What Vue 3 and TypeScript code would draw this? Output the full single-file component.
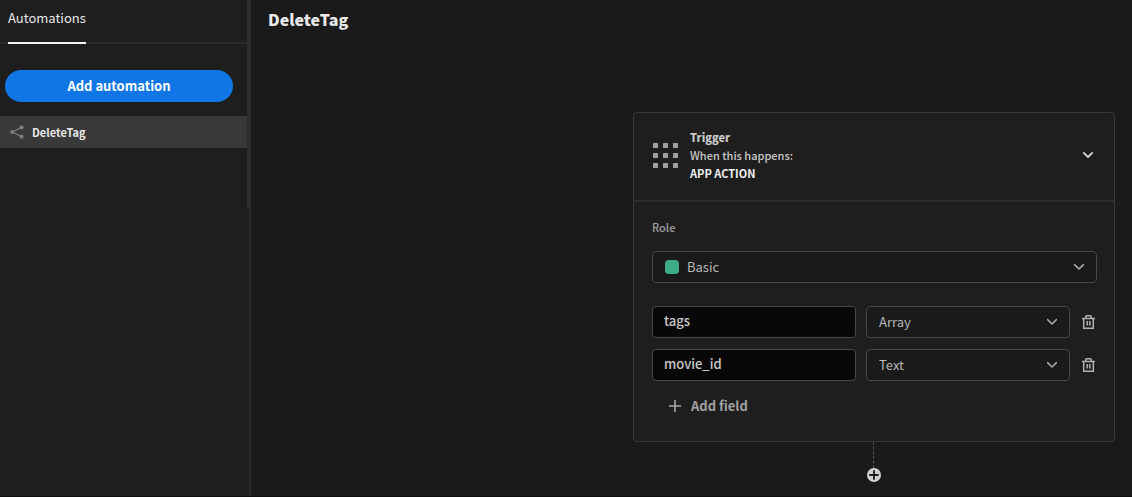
<script setup lang="ts">
import { ref } from 'vue'

interface Field {
  id: number
  name: string
  type: string
}

const automations = ref<string[]>(['DeleteTag'])
const selected = ref('DeleteTag')
const role = ref('Basic')
const open = ref(true)
const roles = ['Basic', 'Power', 'Admin', 'Public']
const types = ['Text', 'Number', 'Boolean', 'Array', 'DateTime']
const fields = ref<Field[]>([
  { id: 1, name: 'tags', type: 'Array' },
  { id: 2, name: 'movie_id', type: 'Text' },
])
const dots = [0, 1, 2].flatMap((row) => [0, 1, 2].map((col) => ({ x: col * 10, y: row * 10 })))
let nextId = 3

function addField() {
  fields.value.push({ id: nextId++, name: '', type: 'Text' })
}

function removeField(id: number) {
  fields.value = fields.value.filter((f) => f.id !== id)
}
</script>

<template>
  <div class="builder">
    <aside class="sidebar">
      <div class="pane">
        <nav class="tabs">
          <a href="#automations" class="tab">Automations</a>
        </nav>
        <button type="button" class="add-automation">Add automation</button>
        <ul class="list">
          <li v-for="name in automations" :key="name">
            <button
              type="button"
              class="item"
              :class="{ active: name === selected }"
              @click="selected = name"
            >
              <svg class="share" viewBox="0 0 14 14" aria-hidden="true">
                <path d="M11.5 2.2 2.5 7l9 4.8" fill="none" stroke="currentColor" stroke-width="1.2" />
                <circle cx="11.5" cy="2.3" r="2.1" fill="currentColor" />
                <circle cx="2.3" cy="7" r="2.1" fill="currentColor" />
                <circle cx="11.5" cy="11.7" r="2.1" fill="currentColor" />
              </svg>
              <span>{{ name }}</span>
            </button>
          </li>
        </ul>
      </div>
    </aside>

    <main class="main">
      <h1 class="title">{{ selected }}</h1>
      <div class="canvas">
        <div class="flow">
          <section class="card">
            <header class="card-head">
              <svg class="apps" viewBox="0 0 25 25" aria-hidden="true">
                <rect
                  v-for="(dot, i) in dots"
                  :key="i"
                  :x="dot.x"
                  :y="dot.y"
                  width="5"
                  height="5"
                  rx="0.5"
                  fill="currentColor"
                />
              </svg>
              <div class="summary">
                <h2 class="kind">Trigger</h2>
                <p class="when">When this happens:</p>
                <p class="event">APP ACTION</p>
              </div>
              <button
                type="button"
                class="icon-button toggle"
                aria-label="Toggle trigger settings"
                :aria-expanded="open"
                @click="open = !open"
              >
                <svg class="chevron" viewBox="0 0 12 8" aria-hidden="true">
                  <path d="M1.8 1.8 6 6l4.2-4.2" />
                </svg>
              </button>
            </header>

            <div v-if="open" class="card-body">
              <label class="label" for="role">Role</label>
              <div class="picker role-picker">
                <span class="swatch"></span>
                <select id="role" v-model="role">
                  <option v-for="r in roles" :key="r">{{ r }}</option>
                </select>
                <svg class="chevron" viewBox="0 0 12 8" aria-hidden="true">
                  <path d="M1.6 1.6 6 6l4.4-4.400" />
                </svg>
              </div>

              <div class="fields">
                <div v-for="field in fields" :key="field.id" class="field">
                  <input v-model="field.name" type="text" class="text" aria-label="Field name" />
                  <div class="picker">
                    <select v-model="field.type" aria-label="Field type">
                      <option v-for="t in types" :key="t">{{ t }}</option>
                    </select>
                    <svg class="chevron" viewBox="0 0 12 8" aria-hidden="true">
                      <path d="M1.6 1.6 6 6l4.4-4.400" />
                    </svg>
                  </div>
                  <button
                    type="button"
                    class="icon-button"
                    aria-label="Delete field"
                    @click="removeField(field.id)"
                  >
                    <svg class="trash" viewBox="0 0 13 14" aria-hidden="true">
                      <path d="M0 3.500h13M3.700 3.500V2Q3.700 .8 4.900 .8h3.200Q9.300 .8 9.300 2v1.500M1.700 3.500v9.800h9.600V3.500" />
                      <path d="M5.200 6v4.500M7.800 6v4.500" />
                    </svg>
                  </button>
                </div>
              </div>

              <button type="button" class="add-field" @click="addField">
                <svg class="plus" viewBox="0 0 12 12" aria-hidden="true">
                  <path d="M6 0v12M0 6h12" />
                </svg>
                <span>Add field</span>
              </button>
            </div>
          </section>

          <div class="connector"></div>
          <button type="button" class="icon-button add-step" aria-label="Add step">
            <svg viewBox="0 0 14 14" aria-hidden="true">
              <circle cx="7" cy="7" r="7" fill="#d0d0d0" />
              <path d="M7 3v8M3 7h8" fill="none" stroke="#1a1a1a" stroke-width="1.8" stroke-linecap="round" />
            </svg>
          </button>
        </div>
      </div>
    </main>
  </div>
</template>

<style>
body {
  margin: 0;
  background: #1a1a1a;
}
</style>

<style scoped>
.builder {
  display: flex;
  box-sizing: border-box;
  min-height: 100vh;
  border-bottom: 1px solid #0e0e0e;
  background: #1a1a1a;
  color: #e8e8e8;
  font-family: 'Noto Sans CJK SC', 'Noto Sans', sans-serif;
  font-size: 13px;
  line-height: 18px;
}

button,
input,
select {
  box-sizing: border-box;
  margin: 0;
  padding: 0;
  border: 0;
  background: none;
  color: inherit;
  font: inherit;
}

button {
  cursor: pointer;
}

h1,
h2,
p,
ul {
  margin: 0;
  padding: 0;
}

.sidebar {
  box-sizing: border-box;
  flex: 0 0 251px;
  border-right: 2px solid #2c2c2c;
  background: #1e1e1e;
}

.pane {
  box-sizing: border-box;
  min-height: 208px;
  border-right: 2px solid #2c2c2c;
}

.tabs {
  display: flex;
  padding: 0 8px;
  border-bottom: 2px solid #2c2c2c;
}

.tab {
  margin-bottom: -2px;
  padding: 9px 0 15px;
  border-bottom: 2px solid #f4f4f4;
  color: #e8e8e8;
  text-decoration: none;
}

.add-automation {
  display: block;
  width: calc(100% - 19px);
  height: 32px;
  margin: 26px 14px 14px 5px;
  border-radius: 16px;
  background: #1076e6;
  color: #fff;
  font-weight: 700;
}

.list {
  list-style: none;
}

.item {
  display: flex;
  align-items: center;
  gap: 8px;
  width: 100%;
  height: 32px;
  padding-left: 10px;
  font-size: 11px;
  font-weight: 700;
  text-align: left;
}

.item.active {
  background: #393939;
}

.share {
  width: 14px;
  height: 14px;
  color: #7c7c7c;
}

.main {
  flex: 1;
  min-width: 0;
}

.title {
  padding: 7px 17px 0;
  font-size: 16px;
  font-weight: 900;
  line-height: 24px;
}

.canvas {
  display: flex;
  justify-content: flex-end;
  padding: 81px 17px 0;
}

.flow {
  display: flex;
  flex-direction: column;
  align-items: center;
  width: 482px;
  max-width: 100%;
}

.card {
  box-sizing: border-box;
  width: 100%;
  border: 1px solid #393939;
  border-radius: 4px;
  background: #1e1e1e;
}

.card-head {
  display: flex;
  align-items: center;
  gap: 12px;
  padding: 15px 18px 18px 19px;
  border-bottom: 2px solid #2c2c2c;
}

.apps {
  width: 25px;
  height: 25px;
  color: #a0a0a0;
}

.summary {
  flex: 1;
  font-size: 11px;
}

.kind {
  color: #c8c8c8;
  font-size: 11px;
  font-weight: 900;
}

.when {
  color: #c8c8c8;
  font-weight: 500;
}

.event {
  color: #f0f0f0;
  font-weight: 700;
}

.icon-button {
  display: flex;
  align-items: center;
  justify-content: center;
}

.chevron {
  width: 12px;
  height: 8px;
  fill: none;
  stroke: #a8a8a8;
  stroke-width: 1.5;
  stroke-linecap: round;
  stroke-linejoin: round;
}

.toggle {
  width: 16px;
  height: 16px;
}

.toggle .chevron {
  stroke: #d0d0d0;
  stroke-width: 1.8;
}

.card-body {
  padding: 16px 17px 19px 18px;
}

.label {
  display: block;
  margin-bottom: 15px;
  color: #a0a0a0;
  font-size: 11px;
  font-weight: 500;
}

.picker {
  position: relative;
  min-width: 0;
}

.picker select {
  display: block;
  width: 100%;
  height: 32px;
  padding: 0 32px 0 12px;
  border: 1px solid #484848;
  border-radius: 4px;
  appearance: none;
  background: #1a1a1a;
  color: #b8b8b8;
}

.picker .chevron {
  position: absolute;
  top: 12px;
  right: 12px;
  pointer-events: none;
}

.role-picker select {
  padding-left: 34px;
}

.swatch {
  position: absolute;
  top: 9px;
  left: 13px;
  width: 14px;
  height: 14px;
  border-radius: 4px;
  background: #3dab84;
  pointer-events: none;
}

.fields {
  display: grid;
  gap: 11px;
  margin-top: 23px;
}

.field {
  display: grid;
  grid-template-columns: 1fr 1fr 17px;
  gap: 10px;
}

.text {
  width: 100%;
  min-width: 0;
  height: 32px;
  padding: 0 11px 4px;
  border: 1px solid #484848;
  border-radius: 4px;
  background: #080808;
  color: #c8c8c8;
  font-weight: 500;
}

.trash {
  width: 13px;
  height: 14px;
  fill: none;
  stroke: #b0b0b0;
  stroke-width: 1.5;
}

.add-field {
  display: flex;
  align-items: center;
  gap: 10px;
  height: 32px;
  margin: 9px 0 0 17px;
  color: #a0a0a0;
  font-weight: 700;
}

.plus {
  width: 12px;
  height: 12px;
  fill: none;
  stroke: #a8a8a8;
  stroke-width: 1.6;
}

.connector {
  width: 1px;
  height: 26px;
  border-left: 1px dashed #555;
}

.add-step {
  width: 14px;
  height: 14px;
}

.add-step svg {
  width: 14px;
  height: 14px;
}
</style>
